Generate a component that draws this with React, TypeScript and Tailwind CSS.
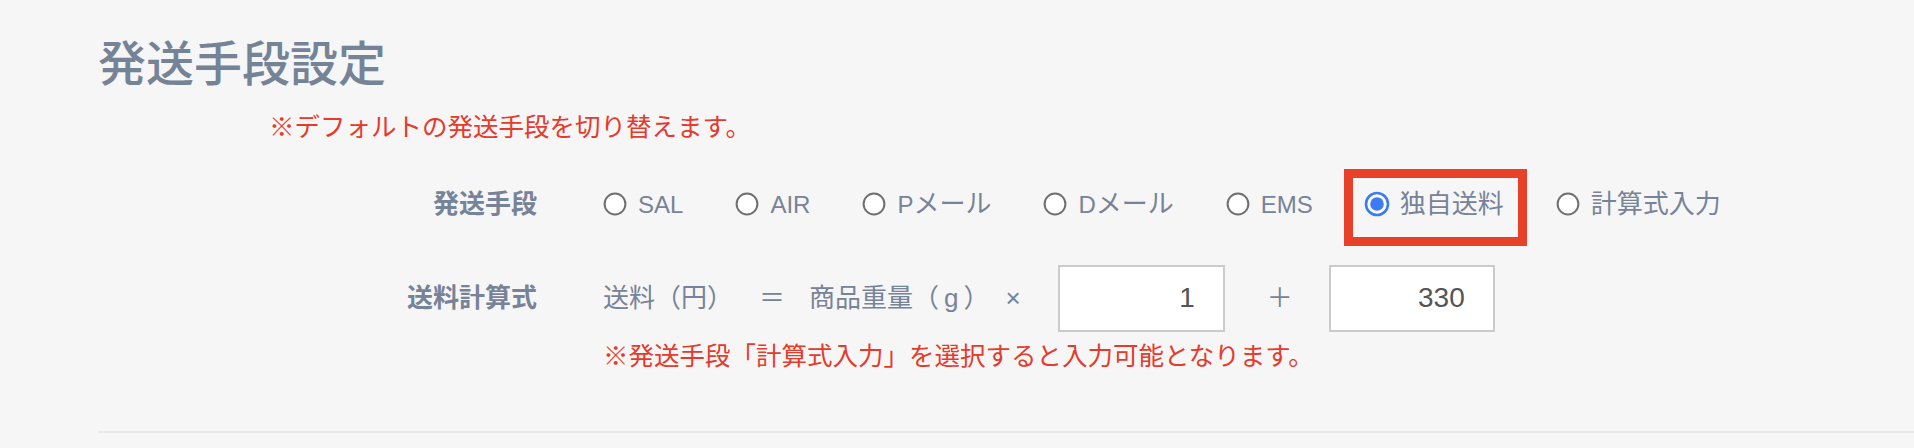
import React from "react";

const methods = [
  { id: "sal", label: <span className="text-[24px]">SAL</span> },
  { id: "air", label: <span className="text-[24px]">AIR</span> },
  { id: "pmail", label: <><span className="text-[24px]">P</span>メール</> },
  { id: "dmail", label: <><span className="text-[24px]">D</span>メール</> },
  { id: "ems", label: <span className="text-[24px]">EMS</span> },
  { id: "own", label: <>独自送料</> },
  { id: "formula", label: <>計算式入力</> },
];

const Radio = ({ checked }: { checked: boolean }) => (
  <svg width="26" height="26" viewBox="0 0 26 26" className="-mx-[1px] shrink-0">
    {checked ? (
      <>
        <circle cx="13" cy="13" r="11" fill="#fff" stroke="#3b7cf4" strokeWidth="2.6" />
        <circle cx="13" cy="13" r="6.8" fill="#3b7cf4" />
      </>
    ) : (
      <circle cx="13" cy="13" r="10.4" fill="#fff" stroke="#6f6f6f" strokeWidth="2" />
    )}
  </svg>
);

const App = () => {
  const selected = "own";
  return (
    <div className="min-h-[448px] w-full bg-[#f6f6f6] font-['Liberation_Sans','Noto_Sans_CJK_JP',sans-serif] text-[#768398]">
      <section className="pl-[98px] pt-[41px]">
        <h2 className="text-[48px] font-medium leading-none text-[#758397]">発送手段設定</h2>
        <p className="ml-[171px] mt-[26px] text-[25.5px] leading-none text-[#e63a2c]">
          ※デフォルトの発送手段を切り替えます。
        </p>

        <div className="mt-[33px] grid grid-cols-[439px_1fr] gap-x-[66px]">
          <div className="flex h-[60px] items-center justify-end text-[26px] font-bold leading-none">発送手段</div>
          <div className="flex h-[60px] items-center gap-[52px] text-[26px] leading-none">
            {methods.map((m) => (
              <label key={m.id} className="relative flex h-[30px] items-center gap-[11px]">
                <Radio checked={m.id === selected} />
                <span>{m.label}</span>
                {m.id === selected && (
                  <span className="pointer-events-none absolute -top-[20px] -bottom-[27px] -left-[21px] -right-[23px] border-[9px] border-[#e8412a]" />
                )}
              </label>
            ))}
          </div>

          <div className="mt-[31px] flex h-[67px] items-center justify-end text-[26px] font-bold leading-none">送料計算式</div>
          <div className="mt-[31px] flex h-[67px] items-center text-[26px] leading-none">
            <span>送料（円）</span>
            <span className="ml-[26px]">＝</span>
            <span className="ml-[24px]">
              商品重量（<span className="px-[5px]">g</span>）
            </span>
            <span className="ml-[16px]">×</span>
            <input
              readOnly
              defaultValue="1"
              className="ml-[37px] h-[67px] w-[167px] border-2 border-[#cbcbcb] bg-white pr-[28px] text-right text-[28px] text-[#555] outline-none"
            />
            <span className="ml-[42px]">＋</span>
            <input
              readOnly
              defaultValue="330"
              className="ml-[36px] h-[67px] w-[166px] border-2 border-[#cbcbcb] bg-white pr-[28px] text-right text-[28px] text-[#555] outline-none"
            />
          </div>

          <div />
          <p className="mt-[12px] text-[25.5px] leading-none text-[#e63a2c]">
            ※発送手段「計算式入力」を選択すると入力可能となります。
          </p>
        </div>

        <div className="mt-[62px] border-t-2 border-[#e9e9e9]" />
      </section>
    </div>
  );
};

export default App;
